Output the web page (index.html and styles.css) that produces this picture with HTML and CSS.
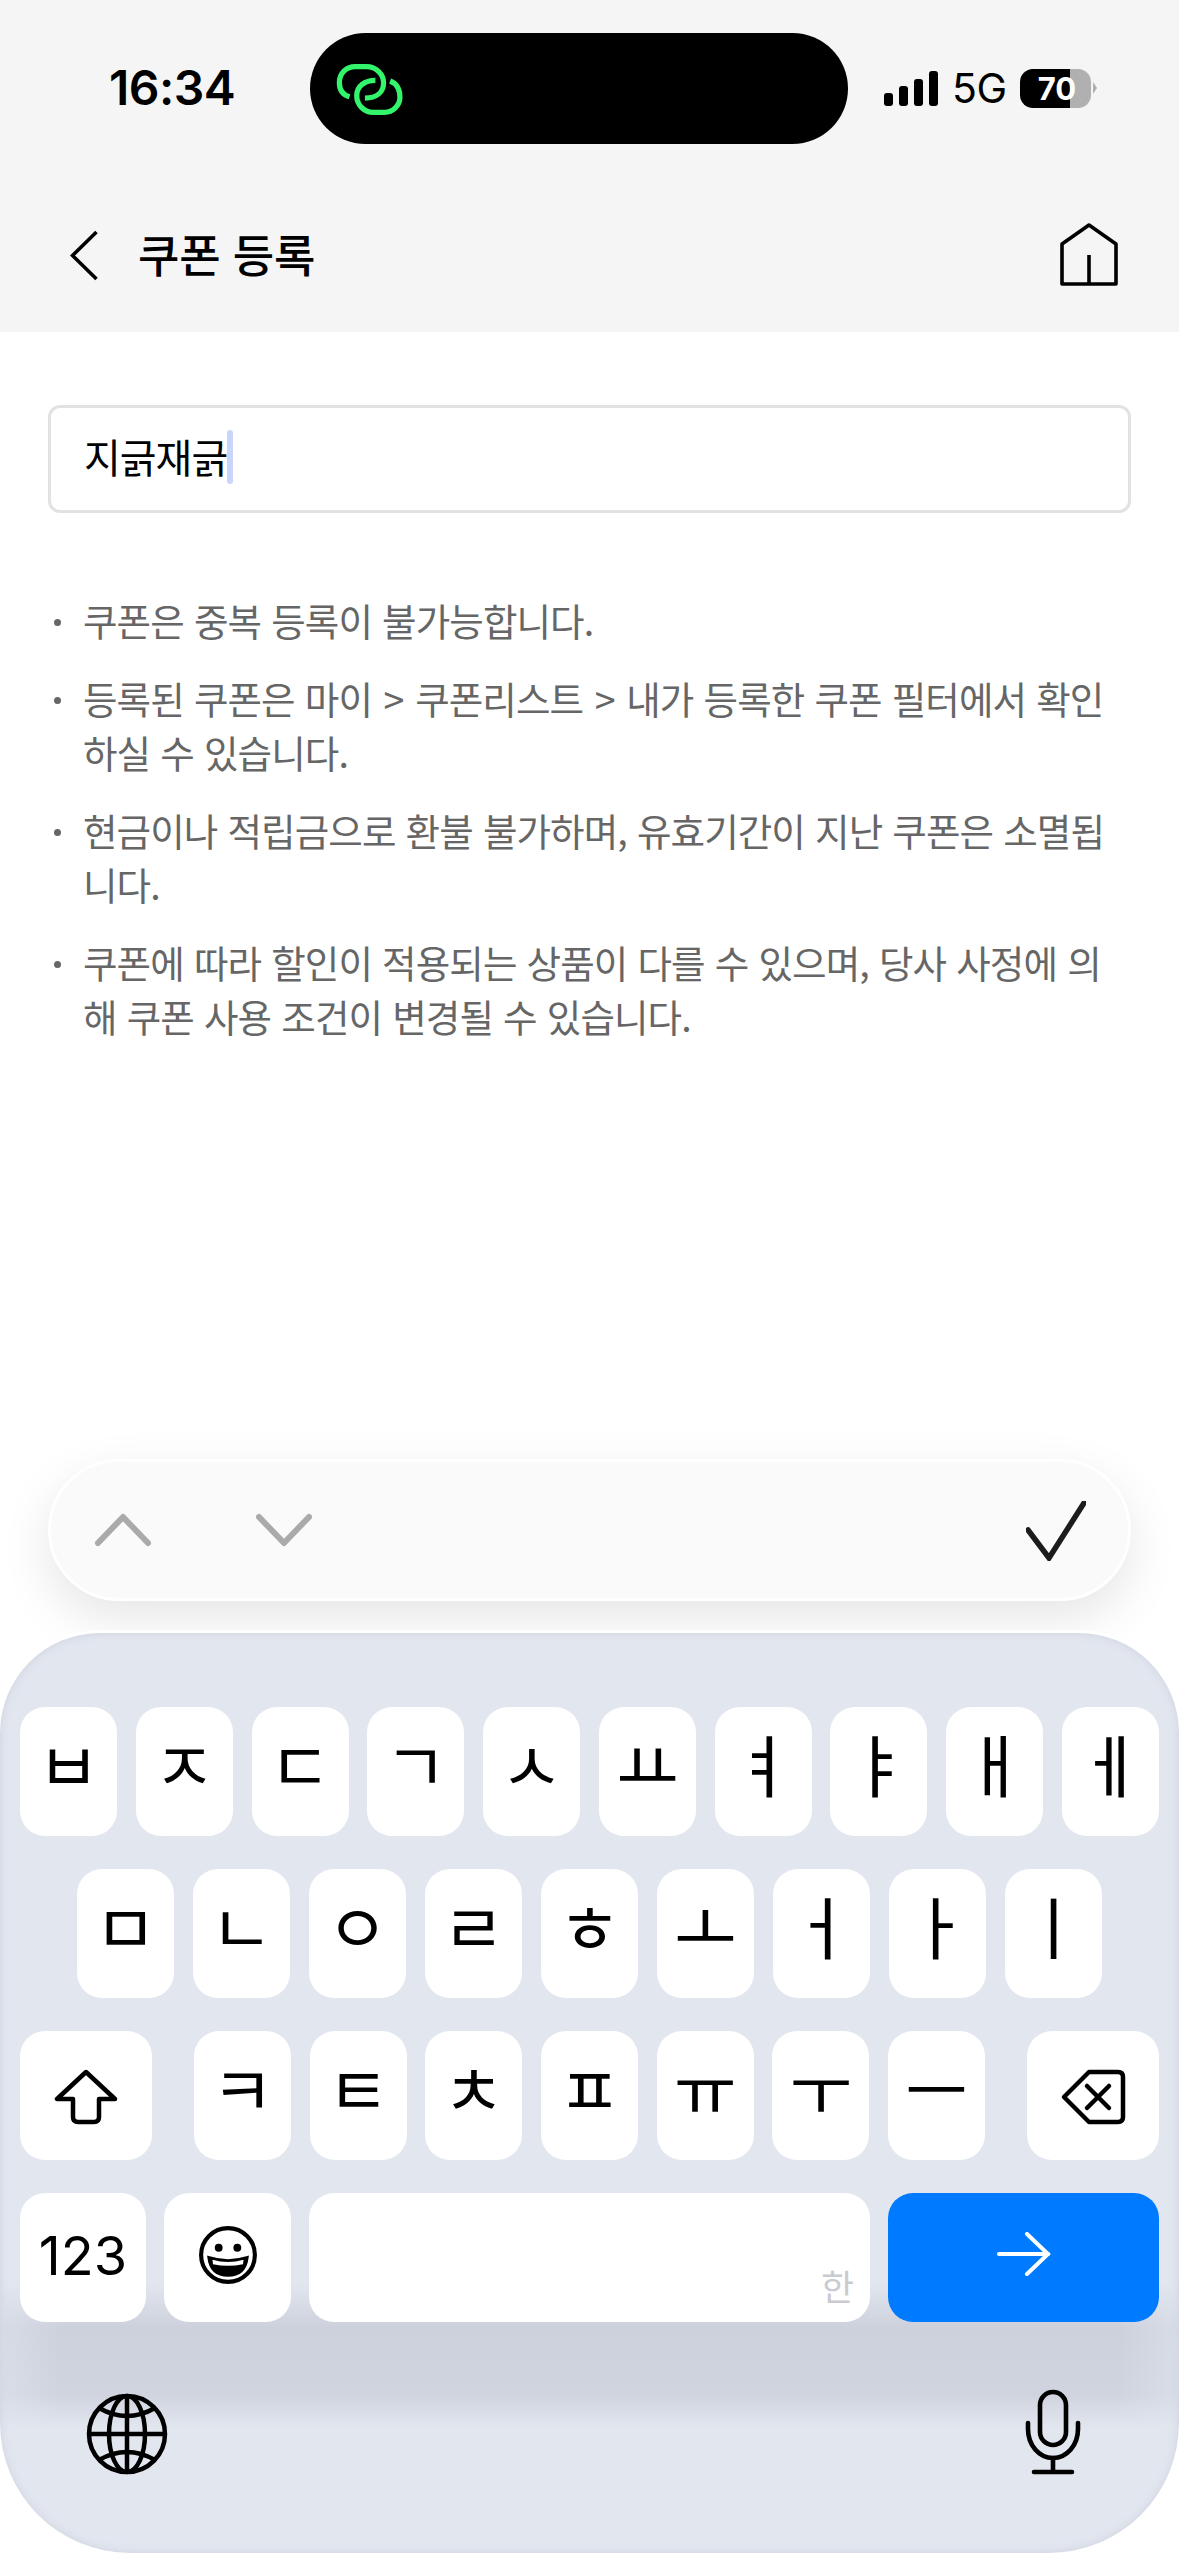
FILE: index.html
```html
<!DOCTYPE html>
<html lang="ko">
<head>
<meta charset="utf-8">
<title>쿠폰 등록</title>
<link rel="stylesheet" href="styles.css">
</head>
<body>
<div class="screen">
  <header class="top">
    <div class="status">
      <span class="time">16:34</span>
      <div class="island">
        <svg class="island-logo" viewBox="100 125 205 165" fill="none" stroke="#32f56c" stroke-width="16" stroke-linecap="butt">
          <path d="M143 228C122 222 112 205 112 185C112 155 135 136 160 136L195 136C225 136 247 160 247 185C247 215 225 232 190 232"/>
          <path d="M222 178C190 178 165 195 165 225C165 255 190 276 215 276L250 276C275 276 297 255 297 230C297 205 285 187 267 180"/>
        </svg>
      </div>
      <div class="status-right">
        <div class="signal"><i class="b1"></i><i class="b2"></i><i class="b3"></i><i class="b4"></i></div>
        <span class="net">5G</span>
        <div class="battery"><span class="batt-num">70</span></div>
        <i class="batt-nub"></i>
      </div>
    </div>
    <nav class="nav">
      <svg class="back" viewBox="0 0 29 51" fill="none" stroke="#000" stroke-width="3.600"><path d="M26.500 2L2.500 25.500L26.500 49"/></svg>
      <h1 class="title">쿠폰 등록</h1>
      <svg class="home" viewBox="0 0 60 64" fill="none" stroke="#000" stroke-width="3.600" stroke-linejoin="round"><path d="M30 2L3 21V61H57V21Z"/><path d="M30 32V61"/></svg>
    </nav>
  </header>

  <main class="content">
    <div class="field"><span class="field-text">지긁재긁</span><i class="caret"></i></div>
    <ul class="tips">
      <li><i class="dot"></i><span>쿠폰은 중복 등록이 불가능합니다.</span></li>
      <li><i class="dot"></i><span>등록된 쿠폰은 마이 <b class="gt">&gt;</b> 쿠폰리스트 <b class="gt">&gt;</b> 내가 등록한 쿠폰 필터에서 확인<br>하실 수 있습니다.</span></li>
      <li><i class="dot"></i><span>현금이나 적립금으로 환불 불가하며, 유효기간이 지난 쿠폰은 소멸됩<br>니다.</span></li>
      <li><i class="dot"></i><span>쿠폰에 따라 할인이 적용되는 상품이 다를 수 있으며, 당사 사정에 의<br>해 쿠폰 사용 조건이 변경될 수 있습니다.</span></li>
    </ul>
  </main>

  <div class="toolbar">
    <svg class="tool-up" viewBox="0 0 58 36" fill="none" stroke="#aaa" stroke-width="6" stroke-linecap="round" stroke-linejoin="round"><path d="M4 31L29 5L54 31"/></svg>
    <svg class="tool-down" viewBox="0 0 58 36" fill="none" stroke="#aaa" stroke-width="6" stroke-linecap="round" stroke-linejoin="round"><path d="M4 5L29 31L54 5"/></svg>
    <svg class="tool-check" viewBox="0 0 60 60" fill="none" stroke="#1c1c1c" stroke-width="5.500" stroke-linecap="round" stroke-linejoin="miter"><path d="M2 29L23 57L58 2"/></svg>
  </div>

  <section class="keyboard">
    <div class="row">
      <div class="key"><span>ㅂ</span></div><div class="key"><span>ㅈ</span></div><div class="key"><span>ㄷ</span></div><div class="key"><span>ㄱ</span></div><div class="key"><span>ㅅ</span></div><div class="key"><span>ㅛ</span></div><div class="key"><span>ㅕ</span></div><div class="key"><span>ㅑ</span></div><div class="key"><span>ㅐ</span></div><div class="key"><span>ㅔ</span></div>
    </div>
    <div class="row row-home">
      <div class="key"><span>ㅁ</span></div><div class="key"><span>ㄴ</span></div><div class="key"><span>ㅇ</span></div><div class="key"><span>ㄹ</span></div><div class="key"><span>ㅎ</span></div><div class="key"><span>ㅗ</span></div><div class="key"><span>ㅓ</span></div><div class="key"><span>ㅏ</span></div><div class="key"><span>ㅣ</span></div>
    </div>
    <div class="row row-shift">
      <div class="key key-mod">
        <svg class="ico-shift" viewBox="0 0 66 56" fill="none" stroke="#000" stroke-width="4.500" stroke-linejoin="round"><path d="M33 3L4 30H20V48Q20 53 25 53H41Q46 53 46 48V30H62Z"/></svg>
      </div>
      <div class="letters">
        <div class="key"><span>ㅋ</span></div><div class="key"><span>ㅌ</span></div><div class="key"><span>ㅊ</span></div><div class="key"><span>ㅍ</span></div><div class="key"><span>ㅠ</span></div><div class="key"><span>ㅜ</span></div><div class="key"><span>ㅡ</span></div>
      </div>
      <div class="key key-mod">
        <svg class="ico-del" viewBox="0 0 66 56" fill="none" stroke="#000" stroke-width="4.500" stroke-linejoin="round" stroke-linecap="round"><path d="M29 3H58Q63 3 63 8V48Q63 53 58 53H29L4 28Z"/><path d="M27 17L49 39M49 17L27 39"/></svg>
      </div>
    </div>
    <div class="row row-bottom">
      <div class="key key-123"><span class="num">123</span></div>
      <div class="key key-emoji">
        <svg class="ico-emoji" viewBox="0 0 58 58" fill="none" stroke="#000" stroke-width="4"><circle cx="29" cy="29" r="26"/><circle cx="20" cy="22" r="3.800" fill="#000" stroke="none"/><circle cx="38" cy="22" r="3.800" fill="#000" stroke="none"/><path d="M10 31Q29 37 48 31Q46 49 29 49Q12 49 10 31Z" fill="#000" stroke="#000" stroke-width="2"/><path d="M14 33.500Q29 38 44 33.500L43.500 38Q29 41 14.500 38Z" fill="#fff" stroke="none"/></svg>
      </div>
      <div class="key key-space"><span class="lang">한</span></div>
      <div class="key key-go">
        <svg class="ico-go" viewBox="0 0 56 44" fill="none" stroke="#fff" stroke-width="4" stroke-linecap="round" stroke-linejoin="miter"><path d="M3 22H52"/><path d="M31 2L52 22L31 42"/></svg>
      </div>
    </div>
    <div class="kb-foot">
      <svg class="ico-globe" viewBox="0 0 82 82" fill="none" stroke="#000" stroke-width="4.500"><circle cx="41" cy="41" r="38"/><ellipse cx="41" cy="41" rx="18" ry="38"/><path d="M41 3V79M3 41H79"/><path d="M13 15Q41 31 69 15M13 67Q41 51 69 67"/></svg>
      <svg class="ico-mic" viewBox="0 0 56 86" fill="none" stroke="#000" stroke-width="4.600" stroke-linecap="round"><rect x="15" y="3" width="26" height="53" rx="13"/><path d="M3 34V40C3 56 14 69 28 69C42 69 53 56 53 40V34"/><path d="M28 69V83M9 83H47"/></svg>
    </div>
  </section>
</div>
</body>
</html>
```
FILE: styles.css
```css
* { box-sizing: border-box; }
html, body { margin: 0; padding: 0; background: #fff; }
body { font-family: "Noto Sans CJK KR", "Noto Sans", sans-serif; overflow: hidden; }
.screen { width: 1179px; height: 2556px; display: flex; flex-direction: column; background: #fff; overflow: hidden; }

.top { background: #f5f5f5; height: 332px; flex: none; }
.status { height: 178px; padding-top: 33px; display: flex; align-items: flex-start; }
.time { font-family: Inter, sans-serif; font-weight: 600; font-size: 48px; line-height: 1; flex: 0 0 310px; padding-left: 109px; margin-top: 31px; color: #000; letter-spacing: -0.5px; white-space: nowrap; }
.island { width: 538px; height: 111px; background: #000; border-radius: 56px; padding: 30px 0 0 25px; flex: none; }
.island-logo { width: 68px; height: 54px; display: block; }
.status-right { display: flex; align-items: center; margin-left: 36px; height: 40px; margin-top: 35px; }
.signal { display: flex; align-items: flex-end; gap: 6px; height: 35px; }
.signal i { display: block; width: 9px; background: #000; border-radius: 3px; }
.signal .b1 { height: 13px; }
.signal .b2 { height: 20px; }
.signal .b3 { height: 27px; }
.signal .b4 { height: 35px; }
.net { font-family: Inter, sans-serif; font-size: 41px; line-height: 1; margin-left: 14px; width: 68px; color: #000; letter-spacing: -0.5px; }
.battery { width: 71px; height: 39px; border-radius: 13px; background: linear-gradient(to right, #000 0 50px, #b0b0b0 50px); display: flex; align-items: center; justify-content: center; }
.batt-num { font-family: Inter, sans-serif; font-weight: 700; font-size: 31px; line-height: 1; color: #fff; margin-left: 3px; }
.batt-nub { display: block; width: 4px; height: 12px; margin-left: 2px; background: #b0b0b0; clip-path: polygon(0 0, 100% 50%, 0 100%); }

.nav { height: 154px; display: flex; align-items: center; padding: 0 60px 0 70px; }
.back { width: 29px; height: 51px; flex: none; }
.title { margin: -3px 0 0 39px; font-size: 45px; font-weight: 500; color: #000; line-height: 1; letter-spacing: -0.2px; flex: 1; }
.home { width: 60px; height: 64px; flex: none; }

.content { flex: 1; padding: 73px 48px 0; }
.field { height: 108px; border: 3px solid #e2e2e2; border-radius: 12px; display: flex; align-items: center; padding-left: 33px; background: #fff; }
.field-text { font-size: 40px; line-height: 1; color: #000; letter-spacing: -1px; margin-top: -6px; }
.caret { display: block; width: 6px; height: 54px; background: #c9d5fa; border-radius: 3px; margin-top: -4px; }
.tips { list-style: none; margin: 80px 0 0; padding: 0 0 0 6px; color: #666; font-size: 37.500px; line-height: 54px; display: flex; flex-direction: column; gap: 24px; white-space: nowrap; letter-spacing: -0.9px; word-spacing: 0.5px; }
.tips li { display: flex; }
.dot { display: block; flex: none; width: 7px; height: 7px; border-radius: 50%; background: #666; margin: 26px 22px 0 0; }
.gt { font-weight: 400; margin: 0 1.500px; }

.toolbar { flex: none; margin: 0 48px; height: 142px; border: 3px solid #fff; border-radius: 71px; background: #fafafa; box-shadow: 0 18px 50px rgba(0,0,0,.1); display: flex; align-items: center; padding: 0 42px 0 43px; }
.tool-up, .tool-down { width: 58px; height: 36px; flex: none; }
.tool-down { margin-left: 103px; }
.tool-check { width: 60px; height: 60px; margin-left: auto; margin-top: 2px; }

.keyboard { flex: none; margin-top: 32px; margin-bottom: 3px; height: 920px; border-radius: 100px 100px 130px 130px; padding-top: 74px;
  background:
    linear-gradient(to right, rgba(226,230,239,.55), rgba(226,230,239,0) 60px, rgba(226,230,239,0) 1119px, rgba(226,230,239,.55)),
    linear-gradient(to bottom, #e2e6ef 0 650px, #cdd1dc 695px, #d0d4de 762px, #e2e6ef 795px);
  box-shadow: 0 -3px 0 #fff, inset 0 0 10px #cdd2de; }
.row { display: flex; gap: 18.700px; padding: 0 20px; height: 129px; margin-bottom: 33px; }
.row-home { padding: 0 77px; }
.row-shift { gap: 42px; }
.letters { display: flex; gap: 18.700px; flex: 1; }
.row-bottom { gap: 18px; margin-bottom: 0; }
.key { flex: 1 1 0; background: #fff; border-radius: 25px; display: flex; align-items: center; justify-content: center; color: #000; font-size: 68px; line-height: 1; min-width: 0; }
.key span { display: block; margin-top: -17px; }
.key-mod { flex: 0 0 132px; }
.key-123 { flex: 0 0 126px; }
.key-123 .num { font-family: Inter, sans-serif; font-size: 54px; margin-top: -3px; letter-spacing: 0; }
.key-emoji { flex: 0 0 127px; }
.key-space { flex: 0 0 561px; align-items: flex-end; justify-content: flex-end; padding: 0 16px 19px 0; }
.key-space .lang { font-size: 36px; color: #c9cbd1; margin: 0; }
.key-go { flex: 0 0 271px; background: #007aff; }
.ico-shift { width: 66px; height: 56px; margin-top: 3px; }
.ico-del { width: 66px; height: 56px; margin-top: 3px; }
.ico-emoji { width: 60px; height: 60px; margin-top: -5px; }
.ico-go { width: 56px; height: 44px; margin-top: -7px; }
.kb-foot { display: flex; justify-content: space-between; align-items: flex-end; padding: 0 98px 0 86px; margin-top: 67px; height: 86px; }
.ico-globe { width: 82px; height: 82px; }
.ico-mic { width: 56px; height: 86px; }
```
